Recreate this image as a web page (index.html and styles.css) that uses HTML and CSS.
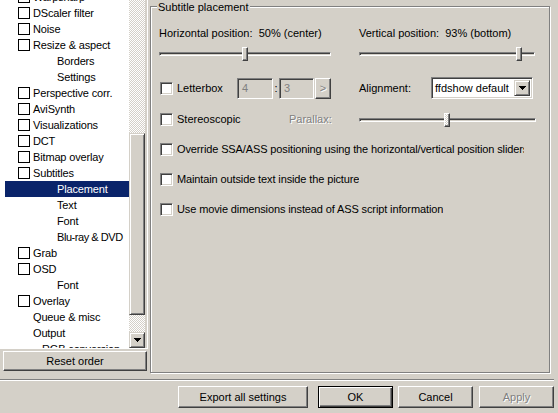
FILE: index.html
```html
<!DOCTYPE html>
<html>
<head>
<meta charset="utf-8">
<link rel="stylesheet" href="styles.css">
</head>
<body>
<div class="top">
  <div class="side">
    <div class="tree">
      <div class="tree-in">
        <ul class="items">
          <li class="item"><span class="tcb"></span>Warpsharp</li>
          <li class="item"><span class="tcb"></span>DScaler filter</li>
          <li class="item"><span class="tcb"></span>Noise</li>
          <li class="item"><span class="tcb"></span>Resize &amp; aspect</li>
          <li class="item child">Borders</li>
          <li class="item child">Settings</li>
          <li class="item"><span class="tcb"></span>Perspective corr.</li>
          <li class="item"><span class="tcb"></span>AviSynth</li>
          <li class="item"><span class="tcb"></span>Visualizations</li>
          <li class="item"><span class="tcb"></span>DCT</li>
          <li class="item"><span class="tcb"></span>Bitmap overlay</li>
          <li class="item"><span class="tcb"></span>Subtitles</li>
          <li class="item child sel">Placement</li>
          <li class="item child">Text</li>
          <li class="item child">Font</li>
          <li class="item child tight">Blu-ray &amp; DVD</li>
          <li class="item"><span class="tcb"></span>Grab</li>
          <li class="item"><span class="tcb"></span>OSD</li>
          <li class="item child">Font</li>
          <li class="item"><span class="tcb"></span>Overlay</li>
          <li class="item plain">Queue &amp; misc</li>
          <li class="item plain">Output</li>
          <li class="item sub">RGB conversion</li>
        </ul>
        <div class="vscroll">
          <div class="track t1"></div>
          <div class="sb-thumb"></div>
          <div class="track t2"></div>
          <div class="sb-btn"><svg class="tri" width="7" height="4" viewBox="0 0 7 4"><path d="M0 0h7v1H0zM1 1h5v1H1zM2 2h3v1H2zM3 3h1v1H3z" fill="#000"/></svg></div>
        </div>
      </div>
    </div>
    <button class="btn reset">Reset order</button>
  </div>
  <div class="page">
    <div class="group">
      <span class="legend">Subtitle placement</span>
      <div class="row r1">
        <div class="cell1">Horizontal position:&nbsp; 50% (center)</div>
        <div class="cell2">Vertical position:&nbsp; 93% (bottom)</div>
      </div>
      <div class="row r-slider">
        <div class="cell1 slider s1"><div class="chan"></div><div class="sthumb" style="left:83px"></div></div>
        <div class="cell2 slider s2"><div class="chan"></div><div class="sthumb" style="left:157px"></div></div>
      </div>
      <div class="row r2">
        <div class="cell1 line">
          <span class="cb"></span><span class="lb-label">Letterbox</span>
          <span class="edit e1">4</span><span class="colon">:</span><span class="edit e2">3</span>
          <span class="mini-btn">&gt;</span>
        </div>
        <div class="cell2 line">
          <span class="al-label">Alignment:</span>
          <span class="combo"><span class="combo-text">ffdshow default</span><span class="combo-btn"><svg class="tri" width="7" height="4" viewBox="0 0 7 4"><path d="M0 0h7v1H0zM1 1h5v1H1zM2 2h3v1H2zM3 3h1v1H3z" fill="#000"/></svg></span></span>
        </div>
      </div>
      <div class="row r3">
        <div class="cell1 line">
          <span class="cb"></span><span class="st-label">Stereoscopic</span><span class="disabled">Parallax:</span>
        </div>
        <div class="cell2 slider s3"><div class="chan"></div><div class="sthumb off" style="left:85px"></div></div>
      </div>
      <div class="row rc">
        <span class="cb"></span><span class="long">Override SSA/ASS positioning using the horizontal/vertical position sliders</span>
      </div>
      <div class="row rc">
        <span class="cb"></span><span class="long">Maintain outside text inside the picture</span>
      </div>
      <div class="row rc">
        <span class="cb"></span><span class="long">Use movie dimensions instead of ASS script information</span>
      </div>
    </div>
  </div>
</div>
<div class="sep"></div>
<div class="buttons">
  <button class="btn b-export">Export all settings</button>
  <button class="btn b-ok">OK</button>
  <button class="btn b-cancel">Cancel</button>
  <button class="btn b-apply">Apply</button>
</div>
</body>
</html>
```

FILE: styles.css
```css
* { box-sizing: border-box; }

body {
  margin: 0;
  width: 558px;
  height: 413px;
  overflow: hidden;
  background: #d4d0c8;
  color: #000;
  font: 11px/13px "Liberation Sans", Arial, sans-serif;
}

.top { display: flex; height: 379px; }

.side { width: 150px; flex: none; display: flex; flex-direction: column; }

.tree {
  width: 148px;
  height: 349px;
  background: #d4d0c8;
  border-right: 1px solid #fff;
  border-bottom: 1px solid #fff;
}

.tree-in {
  display: flex;
  width: 145px;
  height: 348px;
  background: #fff;
  overflow: hidden;
}

.items {
  list-style: none;
  margin: -11px 0 0 0;
  padding: 0;
  width: 129px;
  flex: none;
}

.item {
  height: 16px;
  margin-left: 5px;
  padding-left: 13px;
  display: flex;
  align-items: center;
  white-space: nowrap;
  line-height: 16px;
  letter-spacing: -0.15px;
  overflow: hidden;
}
.item.child { padding-left: 52px; }
.item.plain { padding-left: 28px; }
.item.sub { padding-left: 37px; }
.item.sel { background: #0a246a; color: #fff; }
.item.tight { letter-spacing: -0.45px; }

.tcb {
  width: 12px;
  height: 12px;
  border: 1px solid #000;
  background: #fff;
  margin-right: 3px;
  flex: none;
}

.vscroll { width: 16px; flex: none; display: flex; flex-direction: column; }

.track { background: repeating-conic-gradient(#fff 0 25%, #d4d0c8 0 50%) 0 0 / 2px 2px; }
.t1 { height: 133px; }
.t2 { height: 17px; }

.sb-thumb, .sb-btn {
  background: #d4d0c8;
  border: 1px solid;
  border-color: #d4d0c8 #404040 #404040 #d4d0c8;
  box-shadow: inset 1px 1px #fff, inset -1px -1px #808080;
}
.sb-thumb { height: 182px; }
.sb-btn { height: 16px; display: flex; align-items: center; justify-content: center; }
.tri { display: block; }

.btn {
  background: #d4d0c8;
  border: 1px solid;
  border-color: #fff #404040 #404040 #fff;
  box-shadow: inset -1px -1px #808080;
  font: inherit;
  color: #000;
  padding: 0;
  margin: 0;
}

.reset { margin: 2px 0 0 3px; width: 144px; height: 20px; }

.page { flex: none; width: 408px; padding-top: 6px; }

.group {
  position: relative;
  width: 400px;
  height: 367px;
  border: 1px solid #808080;
  box-shadow: inset 1px 1px #fff, 1px 1px #fff;
  padding: 20px 0 0 8px;
}

.legend {
  position: absolute;
  left: 6px;
  top: -6px;
  padding: 0 1px;
  background: #d4d0c8;
  line-height: 13px;
  white-space: nowrap;
}

.row { display: flex; }
.cell1 { width: 172px; flex: none; }
.cell2 { width: 177px; flex: none; margin-left: 28px; }

.r1 { height: 13px; white-space: nowrap; }

.r-slider { margin-top: 7px; height: 14px; }
.slider { position: relative; height: 14px; }
.s2 { width: 176px; }

.chan {
  position: absolute;
  left: 0;
  right: 0;
  top: 5px;
  height: 4px;
  border: 1px solid;
  border-color: #808080 #fff #fff #808080;
  box-shadow: inset 1px 1px #404040, inset -1px -1px #d4d0c8;
}

.sthumb {
  position: absolute;
  top: 0;
  width: 6px;
  height: 14px;
  background: #d4d0c8;
  border: 1px solid;
  border-color: #fff #404040 #404040 #fff;
  box-shadow: inset -1px -1px #808080;
}
.sthumb.off {
  background: repeating-conic-gradient(#fff 0 25%, #d4d0c8 0 50%) 0 0 / 2px 2px;
}

.line { display: flex; align-items: center; white-space: nowrap; }

.r2 { margin-top: 16px; height: 22px; }

.cb {
  width: 13px;
  height: 13px;
  flex: none;
  background: #fff;
  border: 1px solid;
  border-color: #808080 #fff #fff #808080;
  box-shadow: inset 1px 1px #404040, inset -1px -1px #d4d0c8;
  margin-left: 1px;
  margin-right: 4px;
}

.lb-label { width: 60px; flex: none; }

.edit {
  height: 21px;
  flex: none;
  background: #d4d0c8;
  color: #808080;
  border: 1px solid;
  border-color: #808080 #fff #fff #808080;
  box-shadow: inset 1px 1px #404040, inset -1px -1px #d4d0c8;
  padding: 3px 0 0 4px;
}
.e1 { width: 36px; }
.e2 { width: 35px; }
.colon { width: 6px; flex: none; text-align: center; }

.mini-btn {
  width: 16px;
  height: 21px;
  flex: none;
  margin-left: 1px;
  background: #d4d0c8;
  border: 1px solid;
  border-color: #fff #404040 #404040 #fff;
  box-shadow: inset -1px -1px #808080;
  color: #808080;
  text-shadow: 1px 1px #fff;
  display: flex;
  align-items: center;
  justify-content: center;
}

.al-label { width: 72px; flex: none; }

.combo {
  width: 102px;
  height: 22px;
  flex: none;
  display: flex;
  background: #fff;
  border: 1px solid;
  border-color: #808080 #fff #fff #808080;
  box-shadow: inset 1px 1px #404040, inset -1px -1px #d4d0c8;
  padding: 2px;
}
.combo-text { flex: 1; padding-left: 1px; line-height: 16px; overflow: hidden; }
.combo-btn {
  width: 16px;
  flex: none;
  background: #d4d0c8;
  border: 1px solid;
  border-color: #d4d0c8 #404040 #404040 #d4d0c8;
  box-shadow: inset 1px 1px #fff, inset -1px -1px #808080;
  display: flex;
  align-items: center;
  justify-content: center;
}

.r3 { margin-top: 12px; height: 16px; }
.st-label { width: 112px; flex: none; }
.disabled { color: #808080; text-shadow: 1px 1px #fff; }
.s3 { margin-top: 2px; }

.rc { margin-top: 14px; height: 16px; align-items: center; white-space: nowrap; }
.long { max-width: 347px; overflow: hidden; letter-spacing: -0.12px; }

.sep {
  width: 554px;
  height: 2px;
  border-top: 1px solid #808080;
  border-bottom: 1px solid #fff;
}

.buttons { display: flex; margin-top: 5px; padding-left: 178px; }
.buttons .btn { height: 22px; width: 75px; }
.buttons .b-export { width: 130px; }
.buttons .b-ok {
  margin-left: 10px;
  border: 1px solid #000;
  box-shadow: inset 1px 1px #fff, inset -1px -1px #404040, inset -2px -2px #808080;
}
.buttons .b-cancel { margin-left: 5px; }
.buttons .b-apply { margin-left: 6px; color: #808080; text-shadow: 1px 1px #fff; }
```
